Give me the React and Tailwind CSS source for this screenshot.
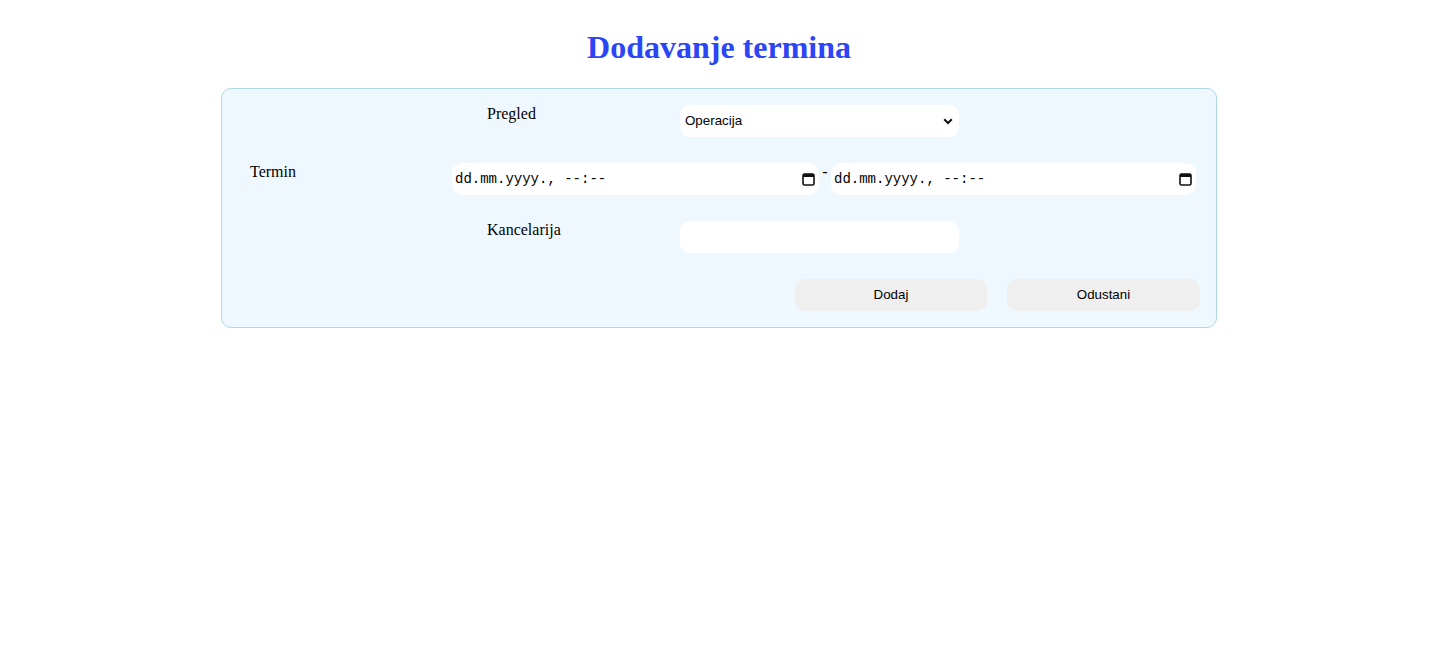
import React from 'react';

const CalendarIcon = () => (
  <svg width="13" height="14" viewBox="0 0 13 14" className="shrink-0">
    <rect x="1" y="2" width="11" height="11" rx="1.5" fill="none" stroke="#111" strokeWidth="1.6" />
    <rect x="1" y="2" width="11" height="3" fill="#111" />
  </svg>
);

const DateTimeField = ({ width }) => (
  <div className={`${width} h-8 bg-white rounded-[10px] flex items-center justify-between pl-[3px] pr-[4px]`}>
    <span className="text-[14px] text-black" style={{ fontFamily: '"Liberation Mono", "Courier New", monospace' }}>
      dd.mm.yyyy., --:--
    </span>
    <CalendarIcon />
  </div>
);

const Label = ({ children, className = '' }) => (
  <div className={`text-base leading-[18px] text-black ${className}`}>{children}</div>
);

export default function App() {
  return (
    <div className="min-h-[648px] bg-white pt-[29px]" style={{ fontFamily: '"Liberation Serif", serif' }}>
      <h1 className="text-center text-[32px] font-bold leading-[37px] text-[#2c46f6]">Dodavanje termina</h1>

      <div className="mx-auto mt-[22px] w-[996px] rounded-[10px] border border-[#add8e6] bg-[#f0f8ff] pt-4 pb-4">
        <div className="flex flex-col gap-[26px]">
          {/* Pregled */}
          <div className="flex pl-[265px]">
            <Label className="w-[193px]">Pregled</Label>
            <div className="w-[279px] h-8 bg-white rounded-[10px] flex items-center justify-between pl-[5px] pr-[6px]">
              <span className="text-[13.33px] text-black" style={{ fontFamily: '"Liberation Sans", Arial, sans-serif' }}>
                Operacija
              </span>
              <svg width="10" height="7" viewBox="0 0 10 7">
                <path d="M1.2 1.2 L5 5 L8.8 1.2" fill="none" stroke="#111" strokeWidth="2" />
              </svg>
            </div>
          </div>

          {/* Termin */}
          <div className="flex pl-[28px]">
            <Label className="w-[202px]">Termin</Label>
            <DateTimeField width="w-[367px]" />
            <div className="w-[12px] text-center text-base leading-[18px]">-</div>
            <DateTimeField width="w-[365px]" />
          </div>

          {/* Kancelarija */}
          <div className="flex pl-[265px]">
            <Label className="w-[193px]">Kancelarija</Label>
            <div className="w-[279px] h-8 bg-white rounded-[10px]" />
          </div>

          {/* Buttons */}
          <div
            className="flex justify-end gap-5 pr-4 text-[13.33px] text-black"
            style={{ fontFamily: '"Liberation Sans", Arial, sans-serif' }}
          >
            <button className="w-[192px] h-8 rounded-[10px] bg-[#efefef]">Dodaj</button>
            <button className="w-[193px] h-8 rounded-[10px] bg-[#efefef]">Odustani</button>
          </div>
        </div>
      </div>
    </div>
  );
}
